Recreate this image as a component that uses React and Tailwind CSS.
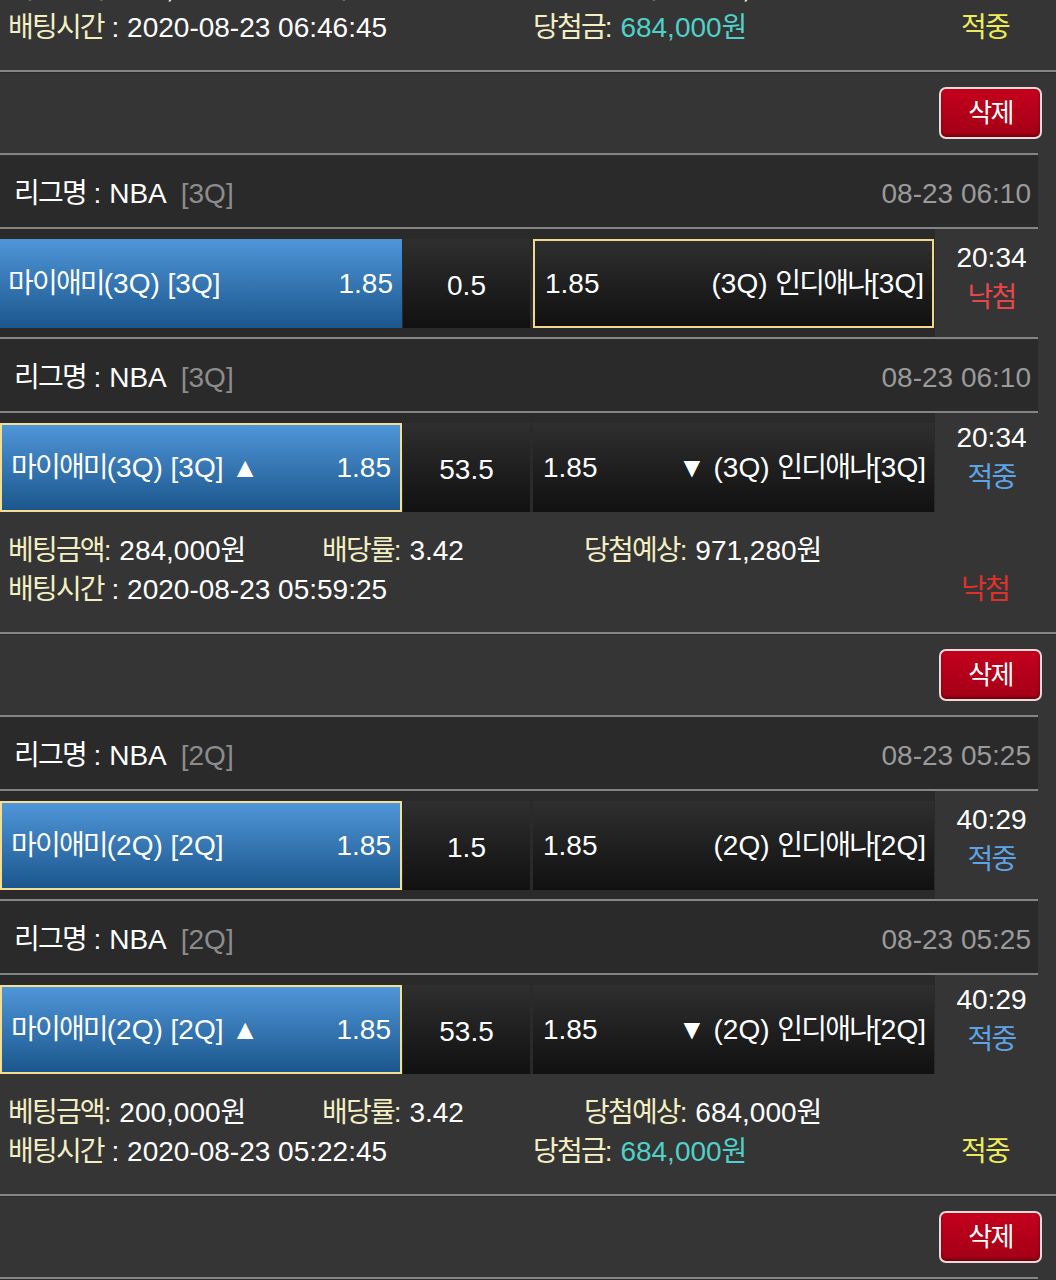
import React from "react";

const FONT = { fontFamily: '"Liberation Sans", "Noto Sans CJK KR", sans-serif' };

// hangul runs get slightly tighter spacing, the CJK face is wider than the original one
const K = (str) =>
  String(str)
    .split(/([가-힣]+)/)
    .map((part, i) =>
      /[가-힣]/.test(part) ? (
        <span key={i} className="tracking-[-0.065em]">
          {part}
        </span>
      ) : (
        part
      )
    );

// --- DATA ---
const bets = [
  {
    summary: {
      amount: "200,000원",
      rate: "3.42",
      expect: "684,000원",
      time: "2020-08-23 06:46:45",
      win: "684,000원",
      result: "적중",
    },
    games: [],
  },
  {
    games: [
      {
        league: "NBA",
        tag: "[3Q]",
        date: "08-23 06:10",
        home: "마이애미(3Q) [3Q]",
        homeOdds: "1.85",
        line: "0.5",
        away: "(3Q) 인디애나[3Q]",
        awayOdds: "1.85",
        pick: "away",
        clock: "20:34",
        status: "낙첨",
      },
      {
        league: "NBA",
        tag: "[3Q]",
        date: "08-23 06:10",
        home: "마이애미(3Q) [3Q] ▲",
        homeOdds: "1.85",
        line: "53.5",
        away: "▼ (3Q) 인디애나[3Q]",
        awayOdds: "1.85",
        pick: "home",
        clock: "20:34",
        status: "적중",
      },
    ],
    summary: {
      amount: "284,000원",
      rate: "3.42",
      expect: "971,280원",
      time: "2020-08-23 05:59:25",
      win: null,
      result: "낙첨",
    },
  },
  {
    games: [
      {
        league: "NBA",
        tag: "[2Q]",
        date: "08-23 05:25",
        home: "마이애미(2Q) [2Q]",
        homeOdds: "1.85",
        line: "1.5",
        away: "(2Q) 인디애나[2Q]",
        awayOdds: "1.85",
        pick: "home",
        clock: "40:29",
        status: "적중",
      },
      {
        league: "NBA",
        tag: "[2Q]",
        date: "08-23 05:25",
        home: "마이애미(2Q) [2Q] ▲",
        homeOdds: "1.85",
        line: "53.5",
        away: "▼ (2Q) 인디애나[2Q]",
        awayOdds: "1.85",
        pick: "home",
        clock: "40:29",
        status: "적중",
      },
    ],
    summary: {
      amount: "200,000원",
      rate: "3.42",
      expect: "684,000원",
      time: "2020-08-23 05:22:45",
      win: "684,000원",
      result: "적중",
    },
  },
];

const Sep = ({ thin }) =>
  thin ? (
    <div className="h-[2px] bg-[#848484]" />
  ) : (
    <div className="h-[3px] border-t-2 border-[#858585] bg-[#2c2c2c]" />
  );

// --- GAME ROW ---
const Game = ({ g, last }) => (
  <div>
    <Sep />
    <div className="h-[71px] bg-[#2a2a2a] flex items-center justify-between pt-[5px] pl-[14px] pr-[7px]">
      <div className="flex items-center">
        <span className="text-white">{K("리그명")} : {g.league}</span>
        <span className="ml-[14px] text-[#8c8c8c]">{g.tag}</span>
      </div>
      <span className="text-[#9a9a9a]">{g.date}</span>
    </div>
    <Sep thin />
    <div className="flex">
      <div className={`w-[935px] bg-[#2a2a2a] pt-[10px] ${last ? "" : "pb-[9px]"}`}>
        <div className="h-[89px] flex">
          <div
            className={`w-[402px] flex items-center justify-between pl-[8px] pr-[9px] bg-gradient-to-b from-[#4f96d9] to-[#1b578d] text-white ${
              g.pick === "home" ? "border-2 border-[#f4dd95] pl-[9px]" : ""
            }`}
          >
            <span>{K(g.home)}</span>
            <span>{g.homeOdds}</span>
          </div>
          <div className="w-[127px] ml-[1px] flex items-center justify-center pt-[4px] bg-gradient-to-b from-[#2f2f2f] to-[#111111] text-white">
            {g.line}
          </div>
          <div
            className={`w-[401px] ml-[3px] flex items-center justify-between pl-[10px] pr-[8px] bg-gradient-to-b from-[#2f2f2f] to-[#111111] text-white ${
              g.pick === "away" ? "border-2 border-[#f0d98c]" : ""
            }`}
          >
            <span>{g.awayOdds}</span>
            <span>{K(g.away)}</span>
          </div>
        </div>
      </div>
      <div className="flex-1 flex flex-col items-center justify-center pl-[10px] pb-[10px] leading-[40px]">
        <span className="text-white">{g.clock}</span>
        <span className={g.status === "낙첨" ? "text-[#e8474a]" : "text-[#5ea4e4]"}>
          {K(g.status)}
        </span>
      </div>
    </div>
  </div>
);

// --- BET SUMMARY ---
const Summary = ({ s }) => (
  <div className="pt-[19px] pb-[23px] pl-[8px] pr-[21px] leading-[39px]">
    <div className="flex">
      <div className="w-[314px]">
        <span className="text-[#f3efc2]">{K("베팅금액")}:</span>
        <span className="text-white"> {K(s.amount)}</span>
      </div>
      <div className="w-[262px]">
        <span className="text-[#f3efc2]">{K("배당률")}:</span>
        <span className="text-white"> {s.rate}</span>
      </div>
      <div>
        <span className="text-[#f3efc2]">{K("당첨예상")}:</span>
        <span className="text-white"> {K(s.expect)}</span>
      </div>
    </div>
    <div className="flex">
      <div className="w-[525px]">
        <span className="text-[#f3efc2]">{K("배팅시간")}</span>
        <span className="text-white"> : {s.time}</span>
      </div>
      <div className="flex-1">
        {s.win && (
          <>
            <span className="text-[#f3efc2]">{K("당첨금")}:</span>
            <span className="text-[#4fd1c9]"> {K(s.win)}</span>
          </>
        )}
      </div>
      <div
        className={`w-[100px] text-center ${
          s.result === "낙첨" ? "text-[#e0302a]" : "text-[#ecec5a]"
        }`}
      >
        {K(s.result)}
      </div>
    </div>
  </div>
);

const DeleteBar = () => (
  <div className="h-[80px] flex items-center justify-end pr-[14px]">
    <button className="w-[103px] h-[52px] rounded-[7px] border-2 border-[#eadada] bg-gradient-to-b from-[#c4001c] to-[#a30016] text-white text-[26px] shadow-[inset_0_-2px_3px_rgba(0,0,0,0.35)]">
      {K("삭제")}
    </button>
  </div>
);

export default function App() {
  return (
    <div className="min-h-screen bg-[#353535] overflow-hidden text-[28px]" style={FONT}>
      <div className="-mt-[50px]">
        {bets.map((bet, i) => (
          <div key={i}>
            {bet.games.length > 0 && (
              <div className="w-[1038px]">
                {bet.games.map((g, j) => (
                  <Game key={j} g={g} last={j === bet.games.length - 1} />
                ))}
              </div>
            )}
            <Summary s={bet.summary} />
            <Sep />
            <DeleteBar />
          </div>
        ))}
        <div className="w-[1038px]">
          <Sep />
        </div>
      </div>
    </div>
  );
}
